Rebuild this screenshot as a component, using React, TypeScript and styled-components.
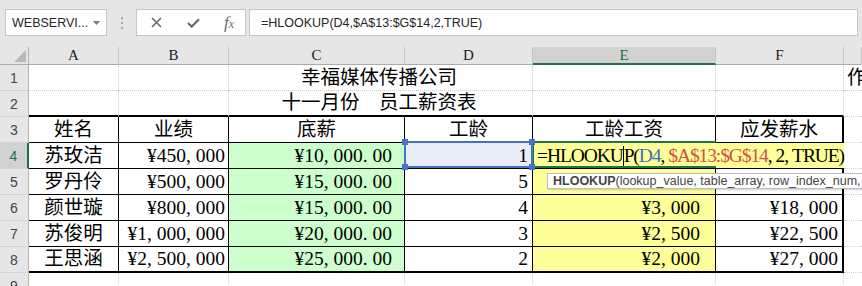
import React from "react";
import styled, { createGlobalStyle } from "styled-components";

const GlobalStyle = createGlobalStyle`
  html, body {
    margin: 0;
    padding: 0;
    background: #fff;
    overflow: hidden;
  }
`;

const Window = styled.div`
  width: 862px;
  height: 286px;
  overflow: hidden;
  display: flex;
  flex-direction: column;
  background: #fff;
`;

const Toolbar = styled.div`
  height: 47px;
  flex: none;
  box-sizing: border-box;
  display: flex;
  align-items: flex-start;
  padding: 9px 4px 0 5px;
  background: #e6e6e6;
  font-family: "Liberation Sans", Arial, sans-serif;
  font-size: 12.5px;
  color: #262626;
`;

const NameBox = styled.div`
  width: 102px;
  height: 27px;
  box-sizing: border-box;
  display: flex;
  align-items: center;
  justify-content: space-between;
  padding: 0 6px;
  background: #fff;
  border: 1px solid #c6c6c6;
`;

const Grip = styled.div`
  width: 2px;
  margin: 8px 13px 0 14px;
  display: flex;
  flex-direction: column;
  gap: 3px;

  span {
    width: 2px;
    height: 2px;
    background: #a6a6a6;
  }
`;

const ButtonGroup = styled.div`
  width: 110px;
  height: 27px;
  box-sizing: border-box;
  display: grid;
  grid-template-columns: 38px 36px 36px;
  align-items: center;
  justify-items: center;
  background: #fff;
  border: 1px solid #c6c6c6;
`;

const Fx = styled.span`
  font-family: "Liberation Serif", serif;
  font-style: italic;
  font-size: 17px;
  color: #6b6b6b;

  small {
    font-size: 12px;
  }
`;

const FormulaInput = styled.div`
  flex: 1;
  height: 27px;
  margin-left: 3px;
  box-sizing: border-box;
  display: flex;
  align-items: center;
  padding-left: 11px;
  background: #fff;
  border: 1px solid #c6c6c6;
`;

const Sheet = styled.div`
  flex: 1;
  display: grid;
  grid-template-columns: 29px 90px 110px 176px 128px 183px 128px minmax(0, 1fr);
  grid-template-rows: 18px repeat(9, 26px);
`;

const Corner = styled.div`
  position: relative;
  box-sizing: border-box;
  background: #e6e6e6;
  border-right: 1px solid #b4b4b4;
  border-bottom: 1px solid #ababab;

  svg {
    position: absolute;
    right: 2px;
    bottom: 2px;
  }
`;

const ColHeader = styled.div<{ $active?: boolean }>`
  box-sizing: border-box;
  display: flex;
  align-items: center;
  justify-content: center;
  background: ${({ $active }) => ($active ? "#d2d2d2" : "#e6e6e6")};
  border-right: 1px solid #c6c6c6;
  border-bottom: ${({ $active }) => ($active ? "2px solid #217346" : "1px solid #ababab")};
  font-family: "Liberation Serif", serif;
  font-size: 15px;
  color: ${({ $active }) => ($active ? "#217346" : "#222")};
`;

const RowHeader = styled.div<{ $active?: boolean }>`
  box-sizing: border-box;
  display: flex;
  align-items: center;
  justify-content: center;
  background: ${({ $active }) => ($active ? "#d2d2d2" : "#e6e6e6")};
  border-right: ${({ $active }) => ($active ? "2px solid #217346" : "1px solid #b4b4b4")};
  border-bottom: 1px solid #d4d4d4;
  font-family: "Liberation Sans", Arial, sans-serif;
  font-size: 14px;
  color: ${({ $active }) => ($active ? "#217346" : "#444")};
`;

type Edge = "grid" | "thin" | "thick" | "none";

const edge = (e: Edge) =>
  e === "thick"
    ? "2px solid #000"
    : e === "thin"
    ? "1px solid #000"
    : e === "none"
    ? "0"
    : "1px dotted #cfcfcf";

const Cell = styled.div<{
  $right?: Edge;
  $bottom?: Edge;
  $fill?: string;
  $align?: "left" | "center" | "right";
  $pad?: number;
  $span?: number;
}>`
  position: relative;
  box-sizing: border-box;
  min-width: 0;
  display: flex;
  align-items: center;
  justify-content: ${({ $align }) =>
    $align === "left" ? "flex-start" : $align === "center" ? "center" : "flex-end"};
  padding: 0 ${({ $pad }) => $pad ?? 3}px 0 ${({ $align }) => ($align === "left" ? 3 : 0)}px;
  grid-column: span ${({ $span }) => $span ?? 1};
  background: ${({ $fill }) => $fill ?? "#fff"};
  border-right: ${({ $right = "grid" }) => edge($right)};
  border-bottom: ${({ $bottom = "grid" }) => edge($bottom)};
  font-family: "Liberation Serif", "Noto Sans CJK SC", serif;
  font-size: 19.5px;
  line-height: 1;
  white-space: nowrap;
  color: #000;
`;

const Punct = styled.span`
  display: inline-block;
  width: 0.5em;
  text-align: left;
`;

const RefFrame = styled.div`
  position: absolute;
  left: -1px;
  top: -2px;
  right: -1px;
  bottom: 0;
  border: 2px solid #4472c4;
  z-index: 3;
  pointer-events: none;
`;

const Handle = styled.span<{ $top?: boolean; $left?: boolean }>`
  position: absolute;
  width: 6px;
  height: 6px;
  background: #4472c4;
  ${({ $top }) => ($top ? "top: -4px;" : "bottom: -4px;")}
  ${({ $left }) => ($left ? "left: -4px;" : "right: -4px;")}
`;

const ActiveFrame = styled.div`
  position: absolute;
  left: -1px;
  top: -2px;
  right: -1px;
  bottom: 0;
  border: 2px solid #217346;
  border-right: 0;
  z-index: 2;
  pointer-events: none;
`;

const EditBox = styled.div`
  position: absolute;
  left: 1px;
  top: 0;
  width: 310px;
  height: 25px;
  box-sizing: border-box;
  display: flex;
  align-items: center;
  padding-left: 3px;
  background: #ffff99;
  z-index: 1;
  letter-spacing: -1.1px;
`;

const Caret = styled.span`
  display: inline-block;
  width: 0;
  height: 20px;
  border-left: 1px solid #000;
`;

const RefText = styled.span<{ $color: string }>`
  color: ${({ $color }) => $color};
`;

const Tooltip = styled.div`
  position: absolute;
  left: 14px;
  top: 4px;
  width: 420px;
  height: 16px;
  box-sizing: border-box;
  display: flex;
  align-items: center;
  padding-left: 5px;
  background: #fff;
  border: 1px solid #bdbdbd;
  box-shadow: 1px 1px 2px rgba(0, 0, 0, 0.2);
  z-index: 4;
  font-family: "Liberation Sans", Arial, sans-serif;
  font-size: 12.5px;
  letter-spacing: 0;
  color: #444;

  b {
    font-weight: 700;
  }
`;

const GREEN = "#ccffcc";
const YELLOW = "#ffff99";
const BLUE_FILL = "#e8edf8";

// SimSun gives "," and "." a half-width cell; keep that spacing
const Money = ({ value }: { value: string }) => (
  <>
    {value.split(/([,.])/).map((part, i) =>
      part === "," || part === "." ? <Punct key={i}>{part}</Punct> : part
    )}
  </>
);

const people = [
  { name: "苏玫洁", perf: "¥450,000", base: "¥10,000.00", years: "1", wage: "", total: "" },
  { name: "罗丹伶", perf: "¥500,000", base: "¥15,000.00", years: "5", wage: "", total: "" },
  { name: "颜世璇", perf: "¥800,000", base: "¥15,000.00", years: "4", wage: "¥3,000", total: "¥18,000" },
  { name: "苏俊明", perf: "¥1,000,000", base: "¥20,000.00", years: "3", wage: "¥2,500", total: "¥22,500" },
  { name: "王思涵", perf: "¥2,500,000", base: "¥25,000.00", years: "2", wage: "¥2,000", total: "¥27,000" },
];

const cols = ["A", "B", "C", "D", "E", "F", "G"];

const App: React.FC = () => {
  return (
    <Window>
      <GlobalStyle />
      <Toolbar>
        <NameBox>
          <span>WEBSERVI...</span>
          <svg width="7" height="4" viewBox="0 0 7 4">
            <path d="M0 0 L7 0 L3.5 4 Z" fill="#7a7a7a" />
          </svg>
        </NameBox>
        <Grip>
          <span />
          <span />
          <span />
        </Grip>
        <ButtonGroup>
          <svg width="11" height="11" viewBox="0 0 11 11">
            <path d="M1 1 L10 10 M10 1 L1 10" stroke="#6b6b6b" strokeWidth="1.6" />
          </svg>
          <svg width="13" height="10" viewBox="0 0 13 10">
            <path d="M1 5 L4.8 8.6 L12 1.2" stroke="#6b6b6b" strokeWidth="2.2" fill="none" />
          </svg>
          <Fx>
            f<small>x</small>
          </Fx>
        </ButtonGroup>
        <FormulaInput>=HLOOKUP(D4,$A$13:$G$14,2,TRUE)</FormulaInput>
      </Toolbar>

      <Sheet>
        <Corner>
          <svg width="12" height="12" viewBox="0 0 12 12">
            <path d="M12 0 L12 12 L0 12 Z" fill="#b9b9b9" />
          </svg>
        </Corner>
        {cols.map((c) => (
          <ColHeader key={c} $active={c === "E"}>
            {c === "G" ? "" : c}
          </ColHeader>
        ))}

        <RowHeader>1</RowHeader>
        <Cell />
        <Cell />
        <Cell $span={2} $align="center">
          幸福媒体传播公司
        </Cell>
        <Cell />
        <Cell />
        <Cell $align="left" $right="none">
          作者
        </Cell>

        <RowHeader>2</RowHeader>
        <Cell $bottom="thick" />
        <Cell $bottom="thick" />
        <Cell $span={2} $align="center" $bottom="thick">
          十一月份　员工薪资表
        </Cell>
        <Cell $bottom="thick" />
        <Cell $bottom="thick" />
        <Cell $right="none" />

        <RowHeader>3</RowHeader>
        {["姓名", "业绩", "底薪", "工龄", "工龄工资", "应发薪水"].map((t, i) => (
          <Cell key={t} $align="center" $pad={0} $right={i === 5 ? "thick" : "thin"} $bottom="thin">
            {t}
          </Cell>
        ))}
        <Cell $right="none" />

        {people.map((p, i) => {
          const row = i + 4;
          const bottom: Edge = row === 8 ? "thick" : "thin";
          return (
            <React.Fragment key={p.name}>
              <RowHeader $active={row === 4}>{row}</RowHeader>
              <Cell $align="center" $pad={0} $right="thin" $bottom={bottom}>
                {p.name}
              </Cell>
              <Cell $right="thin" $bottom={bottom} $pad={3}>
                <Money value={p.perf} />
              </Cell>
              <Cell $right="thin" $bottom={bottom} $pad={12} $fill={GREEN}>
                <Money value={p.base} />
              </Cell>
              <Cell $right="thin" $bottom={bottom} $pad={4} $fill={row === 4 ? BLUE_FILL : undefined}>
                {p.years}
                {row === 4 && (
                  <RefFrame>
                    <Handle $top $left />
                    <Handle $top />
                    <Handle $left />
                    <Handle />
                  </RefFrame>
                )}
              </Cell>
              <Cell $right="thin" $bottom={bottom} $pad={15} $fill={YELLOW}>
                <Money value={p.wage} />
                {row === 4 && (
                  <>
                    <ActiveFrame />
                    <EditBox>
                      =HLOOKU
                      <Caret />
                      P(<RefText $color="#3d6fc6">D4</RefText>
                      <Punct>,</Punct>
                      <RefText $color="#d0504a">$A$13:$G$14</RefText>
                      <Punct>,</Punct>2<Punct>,</Punct>TRUE)
                    </EditBox>
                  </>
                )}
                {row === 5 && (
                  <Tooltip>
                    <b>HLOOKUP</b>(lookup_value, table_array, row_index_num, [range_lookup])
                  </Tooltip>
                )}
              </Cell>
              <Cell $right="thick" $bottom={bottom} $pad={4}>
                <Money value={p.total} />
              </Cell>
              <Cell $right="none" />
            </React.Fragment>
          );
        })}

        <RowHeader>9</RowHeader>
        <Cell />
        <Cell />
        <Cell />
        <Cell />
        <Cell />
        <Cell />
        <Cell $right="none" />
      </Sheet>
    </Window>
  );
};

export default App;
